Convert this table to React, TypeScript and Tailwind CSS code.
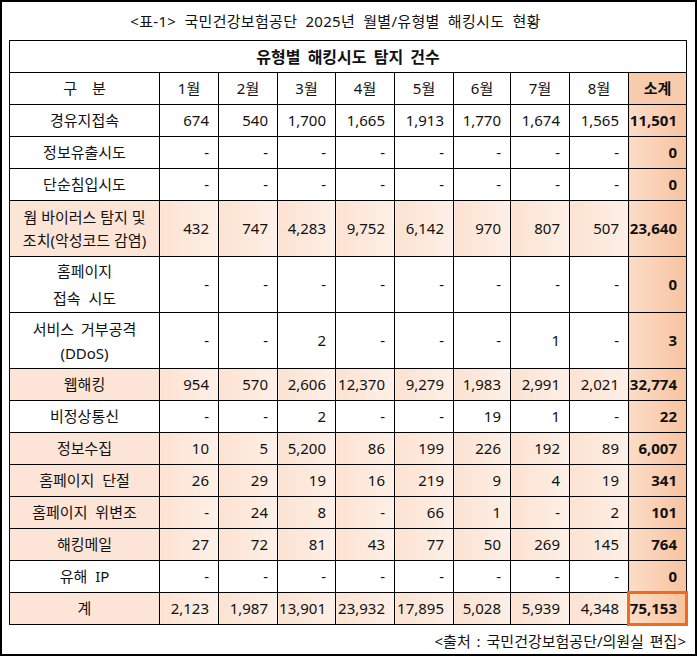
type Row = {
  label: string[];
  values: (number | string)[];
  total: number;
  hl?: boolean;
  lead?: string;
};

const rows: Row[] = [
  { label: ["경유지접속"], values: [674, 540, 1700, 1665, 1913, 1770, 1674, 1565], total: 11501 },
  { label: ["정보유출시도"], values: ["-", "-", "-", "-", "-", "-", "-", "-"], total: 0 },
  { label: ["단순침입시도"], values: ["-", "-", "-", "-", "-", "-", "-", "-"], total: 0 },
  {
    label: ["웜 바이러스 탐지 및", "조치(악성코드 감염)"],
    values: [432, 747, 4283, 9752, 6142, 970, 807, 507],
    total: 23640,
    hl: true,
    lead: "leading-[23px]",
  },
  {
    label: ["홈페이지", "접속 시도"],
    values: ["-", "-", "-", "-", "-", "-", "-", "-"],
    total: 0,
    lead: "leading-[27px] [word-spacing:4px]",
  },
  {
    label: ["서비스 거부공격", "(DDoS)"],
    values: ["-", "-", 2, "-", "-", "-", 1, "-"],
    total: 3,
    lead: "leading-[24px] [word-spacing:3px]",
  },
  { label: ["웹해킹"], values: [954, 570, 2606, 12370, 9279, 1983, 2991, 2021], total: 32774, hl: true },
  { label: ["비정상통신"], values: ["-", "-", 2, "-", "-", 19, 1, "-"], total: 22 },
  { label: ["정보수집"], values: [10, 5, 5200, 86, 199, 226, 192, 89], total: 6007, hl: true },
  { label: ["홈페이지 단절"], values: [26, 29, 19, 16, 219, 9, 4, 19], total: 341, hl: true },
  { label: ["홈페이지 위변조"], values: ["-", 24, 8, "-", 66, 1, "-", 2], total: 101, hl: true },
  { label: ["해킹메일"], values: [27, 72, 81, 43, 77, 50, 269, 145], total: 764, hl: true },
  { label: ["유해 IP"], values: ["-", "-", "-", "-", "-", "-", "-", "-"], total: 0 },
];

const sum: Row = {
  label: ["계"],
  values: [2123, 1987, 13901, 23932, 17895, 5028, 5939, 4348],
  total: 75153,
  hl: true,
};

const widths = ["w-[150px]", "w-[59px]", "w-[59px]", "w-[58px]", "w-[59px]", "w-[59px]", "w-[57px]", "w-[59px]", "w-[59px]", "w-[58px]"];

const fmt = (v: number | string) => (typeof v === "number" ? v.toLocaleString("en-US") : v);

function DataRow({ row, last }: { row: Row; last?: boolean }) {
  const tall = row.label.length > 1;
  return (
    <tr className={tall ? "h-[56px]" : "h-[32px]"}>
      <td
        className={`border border-black text-center ${row.lead ?? "[word-spacing:4px]"} ${
          row.hl ? "bg-[#fce4d6]" : "bg-white"
        }`}
      >
        {row.label.map((l) => (
          <div key={l} className="whitespace-pre">
            {l}
          </div>
        ))}
      </td>
      {row.values.map((v, i) => (
        <td
          key={i}
          className={`border border-black text-right pr-[9px] ${
            row.hl ? "bg-linear-to-r from-[#fce2d1] to-[#fdf0e7]" : "bg-white"
          }`}
        >
          {fmt(v)}
        </td>
      ))}
      <td className="relative border border-black text-right pr-[9px] font-bold bg-linear-to-r from-[#fcdcc7] to-[#f8c39f]">
        {fmt(row.total)}
        {last && <div className="absolute -inset-[2px] border-[3px] border-[#ef6c1f]" />}
      </td>
    </tr>
  );
}

export default function App() {
  return (
    <div className="w-[697px] h-[656px] border-2 border-black bg-white text-[15px] text-[#111] font-['Noto_Sans','Noto_Sans_CJK_KR',sans-serif]">
      <div className="h-[38px] flex items-center justify-center pr-[26px] pt-[1px] text-[15px] tracking-[0.3px] [word-spacing:4px]">
        &lt;표-1&gt; 국민건강보험공단 2025년 월별/유형별 해킹시도 현황
      </div>
      <table className="ml-[7px] border-collapse table-fixed w-[678px] border-[1.5px] border-black">
        <colgroup>
          {widths.map((w, i) => (
            <col key={i} className={w} />
          ))}
        </colgroup>
        <tbody>
          <tr className="h-[32px]">
            <td colSpan={10} className="border border-black text-center font-bold text-[16px] [word-spacing:3px]">
              유형별 해킹시도 탐지 건수
            </td>
          </tr>
          <tr className="h-[32px]">
            <td className="border border-black text-center whitespace-pre">구{"\u3000"}분</td>
            {["1월", "2월", "3월", "4월", "5월", "6월", "7월", "8월"].map((m) => (
              <td key={m} className="border border-black text-center">
                {m}
              </td>
            ))}
            <td className="border border-black text-center font-bold bg-[#f8cbad]">소계</td>
          </tr>
          {rows.map((r) => (
            <DataRow key={r.label.join()} row={r} />
          ))}
          <DataRow row={sum} last />
        </tbody>
      </table>
      <div className="mt-[5px] pr-[9px] text-right text-[15px] [word-spacing:2px]">
        &lt;출처 : 국민건강보험공단/의원실 편집&gt;
      </div>
    </div>
  );
}
